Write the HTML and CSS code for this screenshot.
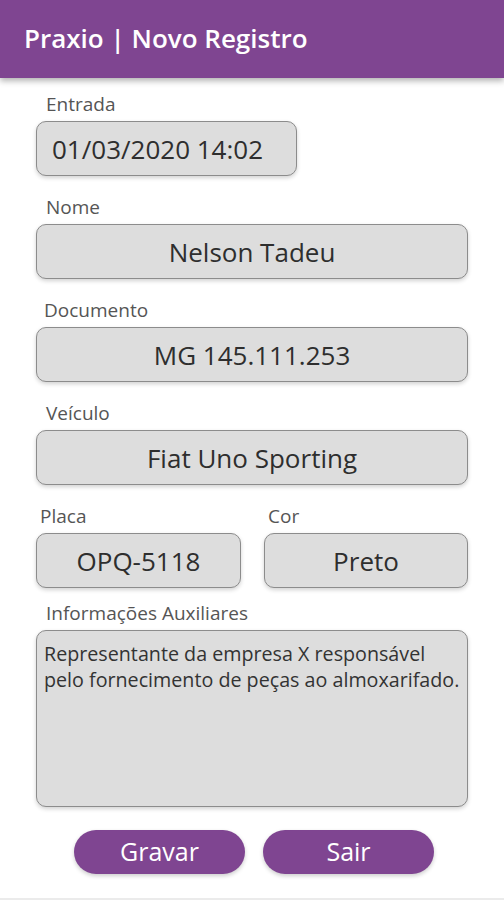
FILE: index.html
```html
<!DOCTYPE html>
<html>
<head>
    <title>Praxio | Novo Registro</title>
    <link rel="stylesheet" href="styles.css">
</head>
<body>
    <header class="topbar">
        <h1>Praxio | Novo Registro</h1>
    </header>

    <form class="registro" id="registro-form">
        <div class="campo">
            <label class="rotulo">Entrada</label>
            <div class="caixa caixa-entrada">01/03/2020 14:02</div>
        </div>
        <div class="campo">
            <label class="rotulo">Nome</label>
            <div class="caixa">Nelson Tadeu</div>
        </div>
        <div class="campo">
            <label class="rotulo rotulo-doc">Documento</label>
            <div class="caixa">MG 145.111.253</div>
        </div>
        <div class="campo">
            <label class="rotulo">Veículo</label>
            <div class="caixa">Fiat Uno Sporting</div>
        </div>
        <!-- Placa e cor lado a lado -->
        <div class="linha">
            <div class="campo">
                <label class="rotulo rotulo-curto">Placa</label>
                <div class="caixa">OPQ-5118</div>
            </div>
            <div class="campo">
                <label class="rotulo rotulo-curto">Cor</label>
                <div class="caixa">Preto</div>
            </div>
        </div>
        <div class="campo campo-info">
            <label class="rotulo">Informações Auxiliares</label>
            <div class="caixa caixa-texto">Representante da empresa X responsável<br>pelo fornecimento de peças ao almoxarifado.</div>
        </div>
        <div class="botoes">
            <button type="button" class="botao">Gravar</button>
            <button type="button" class="botao">Sair</button>
        </div>
    </form>

    <div class="rodape"></div>
</body>
</html>
```

FILE: styles.css
```css
body {
    margin: 0;
    background-color: #FFFFFF;
    font-family: "Open Sans", "Noto Sans", sans-serif;
    height: 900px;
    overflow: hidden;
    display: flex;
    flex-direction: column;
}

.topbar {
    background-color: #7F4591;
    height: 78px;
    flex-shrink: 0;
    box-shadow: 0 3px 6px rgba(0, 0, 0, 0.3);
    display: flex;
    align-items: center;
    padding-left: 24px;
}

.topbar h1 {
    margin: 0;
    color: #FFFFFF;
    font-size: 26px;
    font-weight: 600;
    padding-bottom: 2px;
}

.registro {
    display: flex;
    flex-direction: column;
    padding: 14px 36px 0 36px;
    gap: 19px;
}

.campo {
    display: flex;
    flex-direction: column;
    gap: 5px;
}

.campo-info {
    margin-top: -6px; /* rótulo mais próximo da linha acima */
}

.rotulo {
    color: #555555;
    font-size: 19px;
    line-height: 24px;
    padding-left: 10px;
}

.rotulo-doc {
    padding-left: 8px;
}

.rotulo-curto {
    padding-left: 4px;
}

.caixa {
    background-color: #DDDDDD;
    border: 1px solid #8C8C8C;
    border-radius: 10px;
    box-shadow: 0 2px 4px rgba(0, 0, 0, 0.18);
    height: 55px;
    box-sizing: border-box;
    display: flex;
    align-items: center;
    justify-content: center;
    font-size: 26px;
    color: #2E2E2E;
}

.caixa-entrada {
    width: 261px;
    justify-content: flex-start;
    padding-left: 15px;
}

.caixa-texto {
    height: 177px;
    display: block;
    font-size: 19.7px;
    line-height: 26px;
    padding: 10px 0 0 7px;
    white-space: nowrap;
    color: #333333;
}

.linha {
    display: grid;
    grid-template-columns: 205px 204px;
    justify-content: space-between;
}

.botoes {
    display: flex;
    justify-content: center;
    gap: 18px;
    padding-top: 4px;
    padding-left: 4px;
}

.botao {
    width: 171px;
    height: 44px;
    border: none;
    border-radius: 22px;
    background-color: #7F4591;
    color: #FFFFFF;
    font-family: "Open Sans", "Noto Sans", sans-serif;
    font-size: 25px;
    box-shadow: 0 2px 4px rgba(0, 0, 0, 0.2);
    padding: 0 0 2px 0;
}

.rodape {
    margin-top: auto;
    height: 2px;
    background-color: #EBEBEB;
}
```
